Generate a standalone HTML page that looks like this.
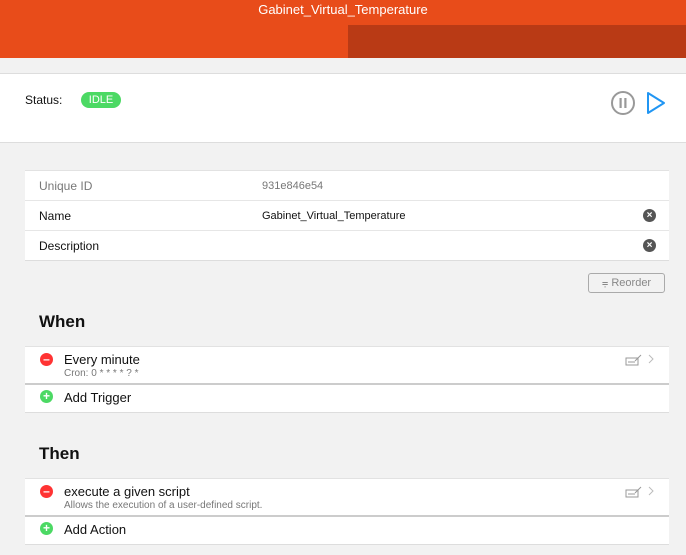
<!DOCTYPE html><html><head><style>
body{margin:0;width:686px;height:555px;background:#f2f2f2;font-family:"Liberation Sans",sans-serif;font-size:12px;color:#111;position:relative;overflow:hidden}
.a{position:absolute}
.hdr{left:0;top:0;width:686px;height:58px;background:#e84c1a}
.dk{left:348px;top:25px;width:338px;height:33px;background:#b93a15}
.ttl{left:0;width:686px;top:2px;text-align:center;color:#fff;font-size:13px}
.st{left:0;top:73px;width:686px;height:68px;background:#fff;border-top:1px solid #ddd;border-bottom:1px solid #ddd}
.card{left:25px;width:644px;background:#fff;border-top:1px solid #e2e2e2;border-bottom:1px solid #ddd}
.row{position:relative;height:29px;border-bottom:1px solid #e6e6e6;line-height:30px;padding-left:14px}
.row:last-child{border-bottom:none}
.x{position:absolute;right:13px;top:8px;width:13px;height:13px;border-radius:50%;background:#555;color:#fff;font-size:10px;line-height:13px;text-align:center;font-weight:bold}
h2{position:absolute;margin:0;font-size:17px;font-weight:bold;left:39px}
.ic{position:absolute;left:15px;width:13px;height:13px;border-radius:50%;color:#fff;font-weight:bold;text-align:center;line-height:12px;font-size:12px}
.ed{position:absolute;left:600px;top:6px}
</style></head><body>
<div class="a hdr"></div><div class="a dk"></div>
<div class="a ttl">Gabinet_Virtual_Temperature</div>
<div class="a st">
<div class="a" style="left:25px;top:19px">Status:</div>
<div class="a" style="left:81px;top:18px;width:40px;height:16px;border-radius:8px;background:#4cd964;color:#fff;font-size:11px;line-height:16px;text-align:center">IDLE</div>
<svg class="a" style="left:610px;top:16px" width="58" height="26"><circle cx="13" cy="13" r="11" fill="none" stroke="#999" stroke-width="2"/><rect x="9.5" y="8" width="2.2" height="10" fill="#999"/><rect x="14.3" y="8" width="2.2" height="10" fill="#999"/><path d="M38 3 L54 13 L38 23 Z" fill="none" stroke="#2196f3" stroke-width="2" stroke-linejoin="round"/></svg>
</div>
<div class="a card" style="top:170px">
<div class="row" style="color:#777">Unique ID<span class="a" style="left:237px;font-size:11px">931e846e54</span></div>
<div class="row">Name<span class="a" style="left:237px;font-size:11px">Gabinet_Virtual_Temperature</span><span class="x">×</span></div>
<div class="row">Description<span class="x">×</span></div>
</div>
<div class="a" style="left:588px;top:273px;width:75px;height:18px;border:1px solid #aaa;border-radius:3px;color:#888;font-size:11px;line-height:18px;text-align:center">⩦ Reorder</div>
<h2 style="top:312px">When</h2>
<div class="a card" style="top:346px;height:65px">
<div class="ic" style="top:6px;background:#f33">–</div>
<div class="a" style="left:39px;top:5px;font-size:13px">Every minute</div>
<div class="a" style="left:39px;top:21px;font-size:10px;color:#777">Cron: 0 * * * * ? *</div>
<svg class="ed" width="34" height="14"><rect x="1" y="5" width="12" height="7" fill="none" stroke="#999"/><path d="M10 8 L16 2" stroke="#999"/><path d="M3 9h7" stroke="#999"/><path d="M24 2 L28 6 L24 10" fill="none" stroke="#bbb"/></svg>
<div class="a" style="left:0;top:36px;width:644px;border-top:2px solid #ccc"></div>
<div class="ic" style="top:43px;background:#4cd964">+</div>
<div class="a" style="left:39px;top:43px;font-size:13px">Add Trigger</div>
</div>
<h2 style="top:444px">Then</h2>
<div class="a card" style="top:478px;height:65px">
<div class="ic" style="top:6px;background:#f33">–</div>
<div class="a" style="left:39px;top:5px;font-size:13px">execute a given script</div>
<div class="a" style="left:39px;top:21px;font-size:10px;color:#777">Allows the execution of a user-defined script.</div>
<svg class="ed" width="34" height="14"><rect x="1" y="5" width="12" height="7" fill="none" stroke="#999"/><path d="M10 8 L16 2" stroke="#999"/><path d="M3 9h7" stroke="#999"/><path d="M24 2 L28 6 L24 10" fill="none" stroke="#bbb"/></svg>
<div class="a" style="left:0;top:36px;width:644px;border-top:2px solid #ccc"></div>
<div class="ic" style="top:43px;background:#4cd964">+</div>
<div class="a" style="left:39px;top:43px;font-size:13px">Add Action</div>
</div>
</body></html>
